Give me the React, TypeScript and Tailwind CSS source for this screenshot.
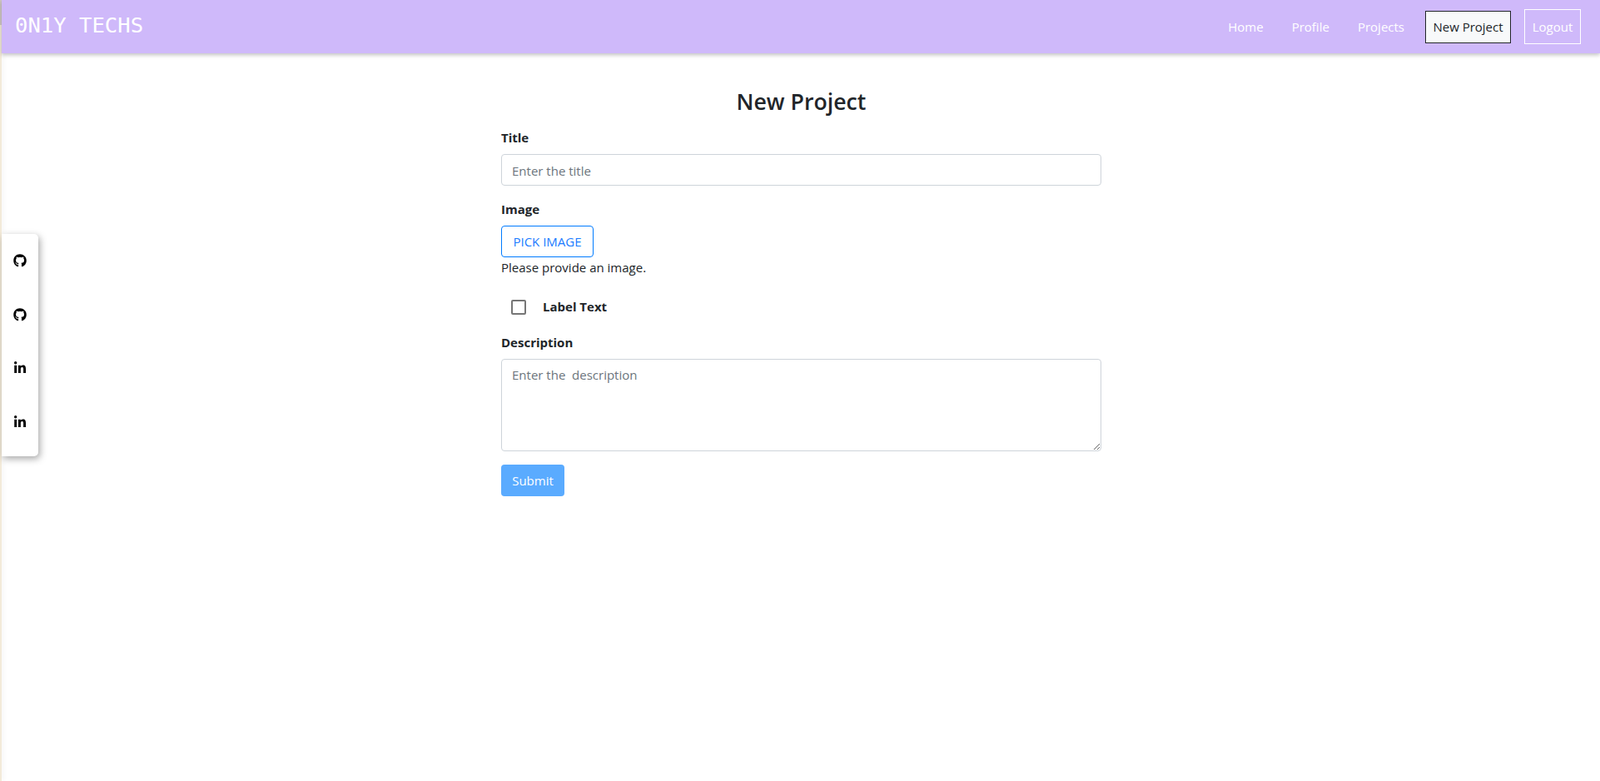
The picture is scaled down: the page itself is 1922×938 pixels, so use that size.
import { FaGithub, FaLinkedinIn } from 'react-icons/fa';

const labelClass = 'block text-[15px] leading-[22px] font-bold text-[#212529] mb-[9px]';
const fieldClass =
  'block w-full border border-[#ced4da] rounded-[4px] px-[12px] text-[15px] text-[#212529] outline-none placeholder:text-[#6c757d]';

function Sidebar() {
  const icons = [FaGithub, FaGithub, FaLinkedinIn, FaLinkedinIn];
  return (
    <div className="absolute left-[2px] top-[281px] w-[44px] h-[267px] bg-white rounded-r-[5px] shadow-[2px_3px_8px_rgba(0,0,0,0.35)] flex flex-col items-center pt-[24px] gap-[48.6px]">
      {icons.map((Icon, i) => (
        <a key={i} href="#" className="text-black">
          <Icon size={16} />
        </a>
      ))}
    </div>
  );
}

function Navbar() {
  return (
    <nav className="relative h-[64px] bg-[#cfb9fa] flex items-center justify-between pl-[16px] pr-[23px] shadow-[0_2px_5px_rgba(0,0,0,0.25)]">
      <a href="#" className="text-[25.6px] text-white font-['DejaVu_Sans_Mono',monospace] -mt-[3px]">
        0N1Y TECHS
      </a>
      <div className="flex items-center text-[15px] text-white">
        <a href="#" className="mr-[34px]">Home</a>
        <a href="#" className="mr-[34px]">Profile</a>
        <a href="#" className="mr-[25px]">Projects</a>
        <a href="#" className="h-[39px] w-[103px] flex items-center justify-center bg-[#f8f9fa] border border-[#212529] text-[#212529] mr-[16px]">
          New Project
        </a>
        <a href="#" className="h-[42px] w-[68px] flex items-center justify-center border border-white">
          Logout
        </a>
      </div>
    </nav>
  );
}

export default function App() {
  return (
    <div className="relative min-h-[938px] bg-white pl-[2px] font-['Open_Sans',sans-serif]">
      {/* thin strip left of the page */}
      <div className="absolute left-0 top-0 bottom-0 w-[2px] bg-[#f3ead9] shadow-[2px_0_5px_rgba(0,0,0,0.07)]" />
      <div className="absolute left-0 top-0 h-[30px] w-[2px] bg-[#cfc7c4]" />
      <Navbar />
      <Sidebar />
      <main className="w-[721px] ml-[600px] pt-[42px]">
        <h1 className="text-[26.7px] leading-[32px] font-semibold text-center text-[#212529] mb-[16px]">New Project</h1>
        <form>
          <div className="mb-[17px]">
            <label className={labelClass}>Title</label>
            <input className={`${fieldClass} h-[38px] pt-[2px]`} placeholder="Enter the title" />
          </div>
          <div className="mb-[16px]">
            <label className={labelClass}>Image</label>
            <button type="button" className="block h-[38px] w-[111px] border border-[#007bff] rounded-[4px] text-[15px] text-[#1a7bff]">
              PICK IMAGE
            </button>
            <p className="text-[15px] leading-[24px] text-[#212529]">Please provide an image.</p>
          </div>
          <div className="flex items-center h-[24px] mt-[24px] mb-[19px] pl-[12px]">
            <span className="w-[18px] h-[18px] border-2 border-[#767676] rounded-[2px] mr-[20px]" />
            <label className="text-[15px] font-bold text-[#212529] -mt-[1px]">Label Text</label>
          </div>
          <div className="mb-[16px]">
            <label className={labelClass}>Description</label>
            <textarea className={`${fieldClass} h-[111px] pt-[7px] pb-[6px]`} placeholder="Enter the  description" />
          </div>
          <button type="button" className="h-[38px] w-[76px] bg-[#5aabff] rounded-[4px] text-[15px] text-white">
            Submit
          </button>
        </form>
      </main>
    </div>
  );
}
